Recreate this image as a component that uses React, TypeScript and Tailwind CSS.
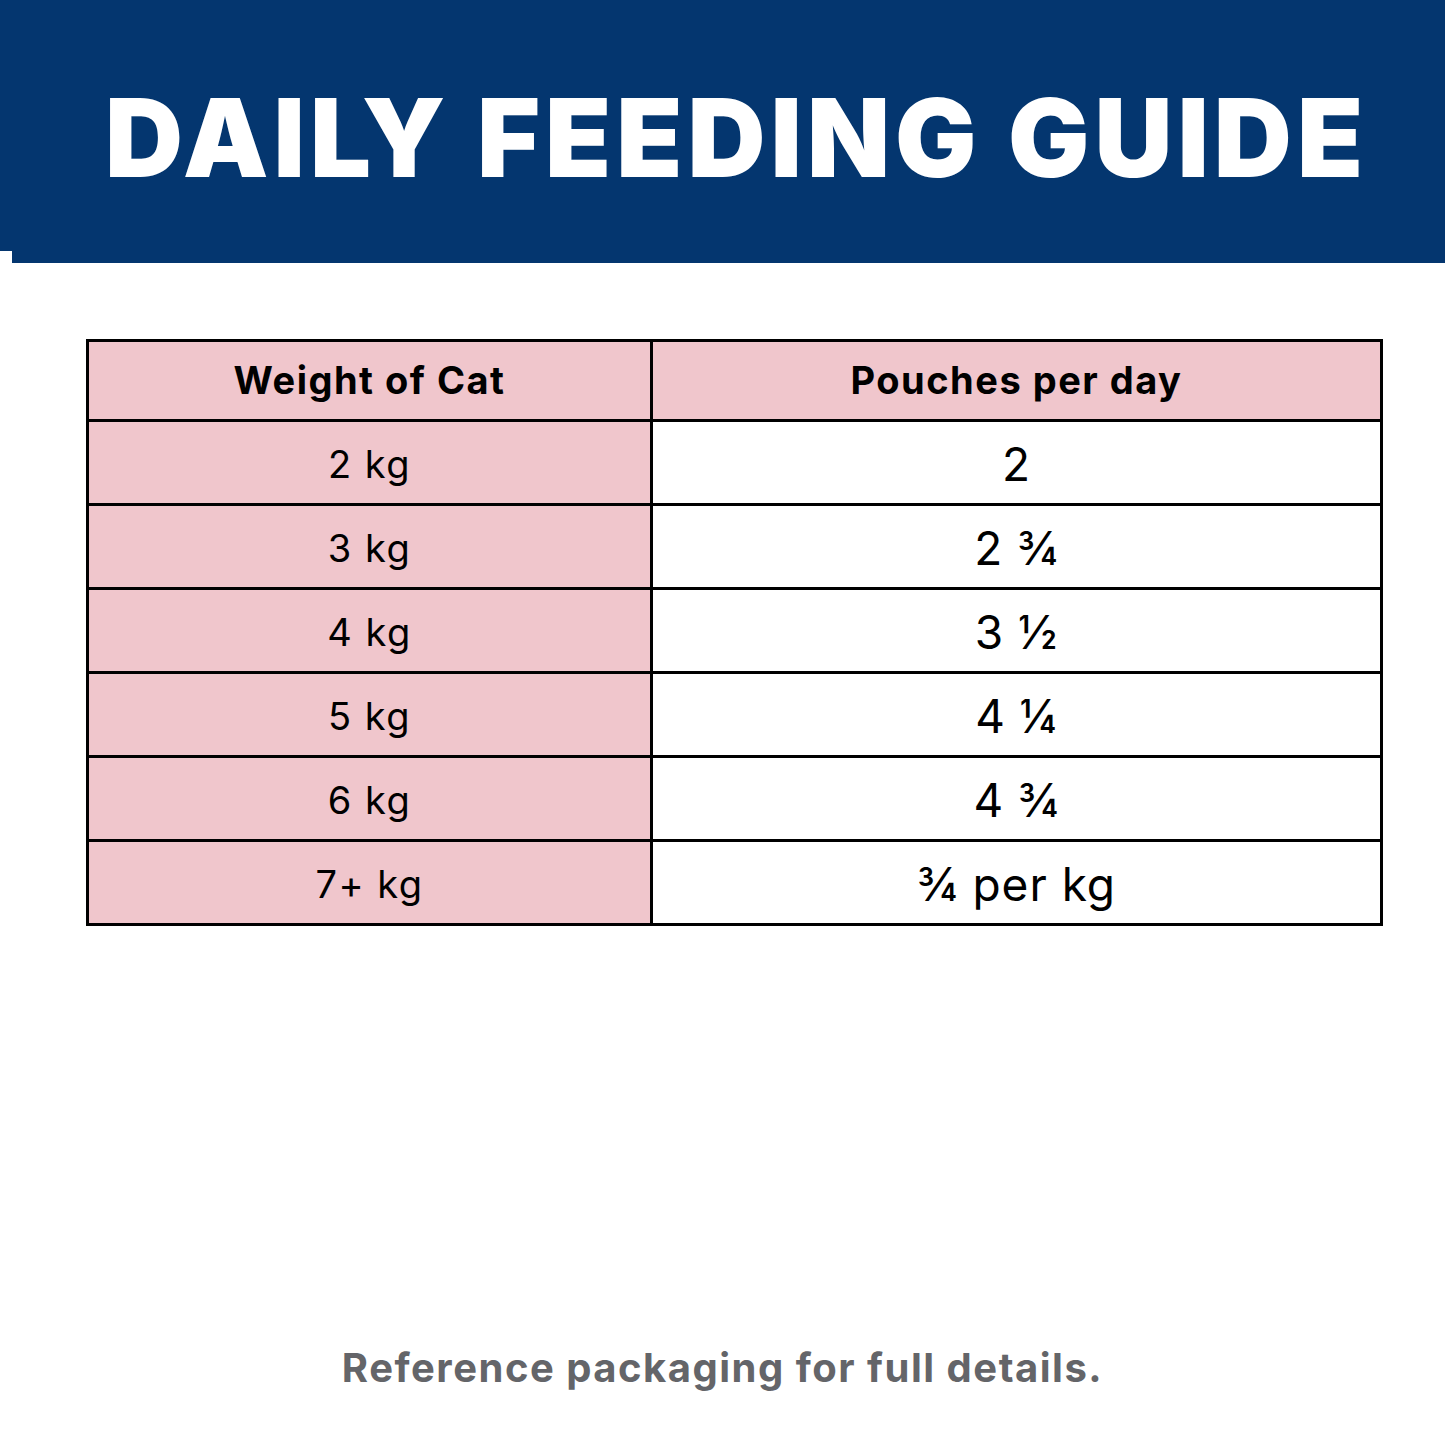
const rows: [string, string][] = [
  ['2 kg', '2'],
  ['3 kg', '2 ¾'],
  ['4 kg', '3 ½'],
  ['5 kg', '4 ¼'],
  ['6 kg', '4 ¾'],
  ['7+ kg', '¾ per kg']
]

export default function App() {
  return (
    <div className="w-[1445px] h-[1445px] bg-white flex flex-col font-['Inter',sans-serif]">
      <div className="h-[251px] bg-[#04366f] flex items-center justify-center pt-[24px] pl-[28px]">
        <h1 className="text-white font-black text-[108px] tracking-[5px] leading-none">
          DAILY FEEDING GUIDE
        </h1>
      </div>
      <div className="flex h-[12px]">
        <div className="w-[12px] bg-white" />
        <div className="flex-1 bg-[#04366f]" />
      </div>

      <div className="mt-[76px] ml-[86px] w-[1297px] border-t-[3px] border-x-[3px] border-black">
        <div className="flex h-[80px] bg-[#f0c6cc] border-b-[3px] border-black">
          <div className="w-[564px] border-r-[3px] border-black flex items-center justify-center text-[38px] tracking-[1.5px] font-bold text-black">
            Weight of Cat
          </div>
          <div className="flex-1 flex items-center justify-center text-[38px] tracking-[1.5px] font-bold text-black">
            Pouches per day
          </div>
        </div>
        {rows.map(([w, p]) => (
          <div key={w} className="flex h-[84px] border-b-[3px] border-black pt-[3px]">
            <div className="w-[564px] bg-[#f0c6cc] border-r-[3px] border-black -mt-[3px] pt-[3px] flex items-center justify-center text-[38px] tracking-[1.5px] text-black">
              {w}
            </div>
            <div className="flex-1 flex items-center justify-center text-[46px] tracking-[1px] text-black">
              {p}
            </div>
          </div>
        ))}
      </div>

      <div className="mt-auto mb-[47px] text-center text-[40px] tracking-[1.5px] font-bold text-[#646569]">
        Reference packaging for full details.
      </div>
    </div>
  )
}
